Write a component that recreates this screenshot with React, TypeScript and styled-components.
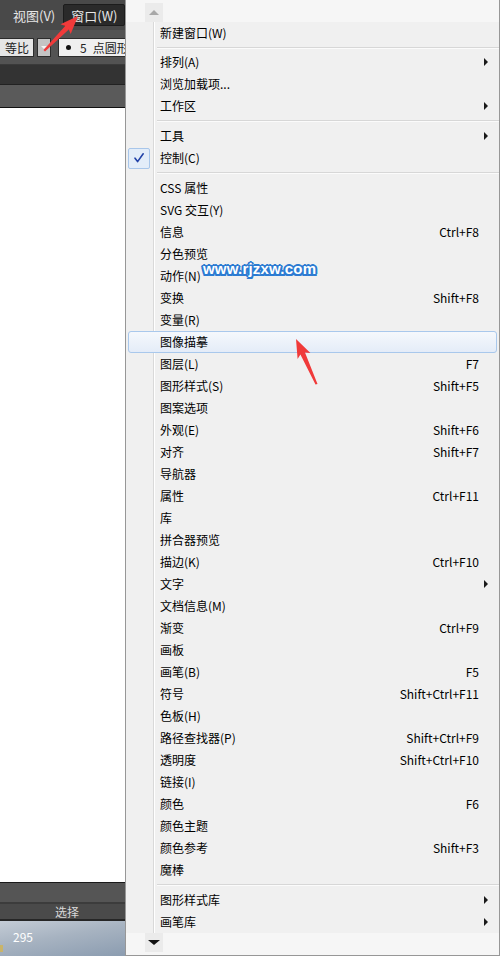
import React from "react";
import styled, { createGlobalStyle } from "styled-components";

const Global = createGlobalStyle`
  html, body { margin: 0; padding: 0; background: #fff; }
  body {
    width: 500px; height: 956px; overflow: hidden;
    font-family: "Noto Sans CJK SC", "Noto Sans", sans-serif;
    font-size: 12px;
  }
`;

const Page = styled.div`
  position: relative;
  width: 500px;
  height: 956px;
  display: flex;
  overflow: hidden;
`;

const LeftPane = styled.div`
  width: 125px;
  flex: none;
  display: flex;
  flex-direction: column;
  overflow: hidden;
  background: #fff;
`;

const MenuBar = styled.div`
  height: 30px;
  flex: none;
  background: #494949;
  display: flex;
  align-items: center;
  gap: 8px;
  padding-left: 13px;
  color: #e6e6e6;
  white-space: nowrap;
  font-size: 13px;
`;

const MenuBarItem = styled.div<{ $active?: boolean }>`
  height: ${(p) => (p.$active ? "20px" : "auto")};
  display: flex;
  align-items: center;
  padding: ${(p) => (p.$active ? "0 7px" : "0")};
  background: ${(p) => (p.$active ? "#2a2a2a" : "transparent")};
  border: ${(p) => (p.$active ? "1px solid #1c1c1c" : "none")};
  border-radius: 2px;
`;

const ToolBar = styled.div`
  height: 34px;
  flex: none;
  background: #535353;
  border-bottom: 1px solid #3a3a3a;
  display: flex;
  align-items: center;
  white-space: nowrap;
`;

const Field = styled.div`
  height: 17px;
  flex: none;
  background: #e6e6e6;
  border: 1px solid #2c2c2c;
  display: flex;
  align-items: center;
  color: #222;
  box-sizing: content-box;
`;

const FirstField = styled(Field)`
  border-left: none;
  padding-left: 5px;
  width: 28px;
`;

const WideField = styled(Field)`
  margin-left: 7px;
  padding-left: 7px;
  background: #efefef;
`;

const Dot = styled.span`
  width: 5px;
  height: 5px;
  flex: none;
  border-radius: 50%;
  background: #111;
  margin-right: 9px;
`;

const Spaced = styled.span`
  margin-right: 6px;
`;

const DropBtn = styled.div`
  width: 12px;
  height: 17px;
  flex: none;
  margin-left: 3px;
  background: #c4c4c4;
  border: 1px solid #2c2c2c;
  display: flex;
  align-items: center;
  justify-content: center;
  &::after {
    content: "";
    border-left: 3px solid transparent;
    border-right: 3px solid transparent;
    border-top: 3px solid #f4f4f4;
  }
`;

const DarkRow = styled.div`
  height: 19px;
  flex: none;
  background: #333333;
  border-bottom: 1px solid #222;
`;

const GrayRow = styled.div`
  height: 22px;
  flex: none;
  background: #5a5a5a;
  border-bottom: 1px solid #111;
`;

const Canvas = styled.div`
  flex: 1;
  background: #fff;
`;

const PanelTop = styled.div`
  height: 19px;
  flex: none;
  background: #555555;
  border-top: 1px solid #1a1a1a;
  border-bottom: 2px solid #3c3c3c;
`;

const PanelTab = styled.div`
  height: 15px;
  flex: none;
  background: #4a4a4a;
  border-bottom: 2px solid #262626;
  color: #d8d8d8;
  padding-left: 55px;
  display: flex;
  align-items: center;
  font-size: 12px;
  line-height: 1;
`;

const StatusBar = styled.div`
  position: relative;
  height: 35px;
  flex: none;
  background: linear-gradient(170deg, #c4ccd6 0%, #a7b3c1 45%, #8b9cb0 100%);
  color: #fff;
  display: flex;
  align-items: center;
  padding-left: 13px;
  padding-bottom: 4px;
  box-sizing: border-box;
`;

const YellowTab = styled.span`
  position: absolute;
  left: 0;
  top: 24px;
  width: 3px;
  height: 7px;
  background: #c9b46a;
`;

const Menu = styled.div`
  flex: 1;
  display: flex;
  flex-direction: column;
  background: #f0f0f0;
  border-left: 1px solid #979797;
  border-right: 1px solid #979797;
  border-bottom: 1px solid #979797;
  color: #000;
`;

const ScrollArea = styled.div`
  height: 22px;
  flex: none;
  background: #f6f6f6;
  padding-left: 19px;
  display: flex;
  align-items: flex-end;
`;

const ScrollAreaBottom = styled(ScrollArea)`
  align-items: flex-start;
`;

const ScrollBtn = styled.div<{ $down?: boolean }>`
  width: 18px;
  height: 19px;
  background: #ebebeb;
  display: flex;
  align-items: center;
  justify-content: center;
  &::after {
    content: "";
    border-left: ${(p) => (p.$down ? "6px" : "5px")} solid transparent;
    border-right: ${(p) => (p.$down ? "6px" : "5px")} solid transparent;
    ${(p) =>
      p.$down
        ? "border-top: 5px solid #111;"
        : "border-bottom: 5px solid #a8a8a8;"}
  }
`;

const ItemList = styled.div`
  flex: 1;
  display: flex;
  flex-direction: column;
  background: linear-gradient(
    to right,
    transparent 27px,
    #d9d9d9 27px,
    #d9d9d9 28px,
    #ffffff 28px,
    #ffffff 29px,
    transparent 29px
  );
`;

const Item = styled.div<{ $hover?: boolean }>`
  height: 22px;
  box-sizing: border-box;
  margin: 0 2px;
  display: flex;
  align-items: center;
  border: 1px solid ${(p) => (p.$hover ? "#a9c8ec" : "transparent")};
  border-radius: 3px;
  background: ${(p) =>
    p.$hover ? "linear-gradient(#f5f8fc, #e4ecf8)" : "transparent"};
  white-space: nowrap;
  line-height: 1;
`;

const Gutter = styled.div`
  width: 31px;
  height: 100%;
  flex: none;
  display: flex;
  align-items: center;
`;

const CheckBox = styled.div`
  width: 20px;
  height: 19px;
  margin-left: -1px;
  border: 1px solid #a8c6ea;
  border-radius: 2px;
  background: #e3edf9;
  display: flex;
  align-items: center;
  justify-content: center;
`;

const Label = styled.span`
  flex: 1;
`;

const Shortcut = styled.span`
  flex: none;
`;

const ArrowCell = styled.span`
  width: 17px;
  flex: none;
  padding-left: 5px;
  box-sizing: border-box;
  display: flex;
  align-items: center;
`;

const SubArrow = styled.span`
  border-left: 4px solid #1a1a1a;
  border-top: 4px solid transparent;
  border-bottom: 4px solid transparent;
`;

const Separator = styled.div<{ $h: number }>`
  height: ${(p) => p.$h}px;
  flex: none;
  padding-left: 31px;
  display: flex;
  align-items: center;
  box-sizing: border-box;
  &::after {
    content: "";
    flex: 1;
    border-top: 1px solid #d7d7d7;
    border-bottom: 1px solid #fbfbfb;
    box-sizing: border-box;
    height: 2px;
  }
`;

const Watermark = styled.div`
  position: absolute;
  left: 203px;
  top: 260px;
  font-family: "Liberation Sans", Arial, sans-serif;
  font-weight: 700;
  font-size: 15px;
  letter-spacing: 0.2px;
  color: #fff;
  text-shadow: -2px 0 #2c7bd2, 2px 0 #2c7bd2, 0 -2px #2c7bd2, 0 2px #2c7bd2,
    -1.5px -1.5px #2c7bd2, 1.5px 1.5px #2c7bd2, -1.5px 1.5px #2c7bd2,
    1.5px -1.5px #2c7bd2, -1px 0 #2c7bd2, 1px 0 #2c7bd2;
  pointer-events: none;
`;

const Overlay = styled.svg`
  position: absolute;
  left: 0;
  top: 0;
  pointer-events: none;
`;

type Entry =
  | { sep: number }
  | { label: string; shortcut?: string; sub?: boolean; checked?: boolean; hover?: boolean };

const entries: Entry[] = [
  { label: "新建窗口(W)" },
  { sep: 7 },
  { label: "排列(A)", sub: true },
  { label: "浏览加载项..." },
  { label: "工作区", sub: true },
  { sep: 8 },
  { label: "工具", sub: true },
  { label: "控制(C)", checked: true },
  { sep: 8 },
  { label: "CSS 属性" },
  { label: "SVG 交互(Y)" },
  { label: "信息", shortcut: "Ctrl+F8" },
  { label: "分色预览" },
  { label: "动作(N)" },
  { label: "变换", shortcut: "Shift+F8" },
  { label: "变量(R)" },
  { label: "图像描摹", hover: true },
  { label: "图层(L)", shortcut: "F7" },
  { label: "图形样式(S)", shortcut: "Shift+F5" },
  { label: "图案选项" },
  { label: "外观(E)", shortcut: "Shift+F6" },
  { label: "对齐", shortcut: "Shift+F7" },
  { label: "导航器" },
  { label: "属性", shortcut: "Ctrl+F11" },
  { label: "库" },
  { label: "拼合器预览" },
  { label: "描边(K)", shortcut: "Ctrl+F10" },
  { label: "文字", sub: true },
  { label: "文档信息(M)" },
  { label: "渐变", shortcut: "Ctrl+F9" },
  { label: "画板" },
  { label: "画笔(B)", shortcut: "F5" },
  { label: "符号", shortcut: "Shift+Ctrl+F11" },
  { label: "色板(H)" },
  { label: "路径查找器(P)", shortcut: "Shift+Ctrl+F9" },
  { label: "透明度", shortcut: "Shift+Ctrl+F10" },
  { label: "链接(I)" },
  { label: "颜色", shortcut: "F6" },
  { label: "颜色主题" },
  { label: "颜色参考", shortcut: "Shift+F3" },
  { label: "魔棒" },
  { sep: 8 },
  { label: "图形样式库", sub: true },
  { label: "画笔库", sub: true },
];

const CheckIcon = () => (
  <svg width="12" height="12" viewBox="0 0 12 12">
    <path
      d="M2 6.2 L4.6 9.6 L10.2 1.8"
      fill="none"
      stroke="#2242a8"
      strokeWidth="1.6"
      strokeLinecap="round"
      strokeLinejoin="round"
    />
  </svg>
);

export default function App() {
  return (
    <>
      <Global />
      <Page>
        <LeftPane>
          <MenuBar>
            <MenuBarItem>视图(V)</MenuBarItem>
            <MenuBarItem $active>窗口(W)</MenuBarItem>
          </MenuBar>
          <ToolBar>
            <FirstField>等比</FirstField>
            <DropBtn />
            <WideField>
              <Dot />
              <Spaced>5</Spaced>
              点圆形
            </WideField>
          </ToolBar>
          <DarkRow />
          <GrayRow />
          <Canvas />
          <PanelTop />
          <PanelTab>选择</PanelTab>
          <StatusBar>
            <YellowTab />
            295
          </StatusBar>
        </LeftPane>
        <Menu>
          <ScrollArea>
            <ScrollBtn />
          </ScrollArea>
          <ItemList>
            {entries.map((e, i) =>
              "sep" in e ? (
                <Separator key={i} $h={e.sep} />
              ) : (
                <Item key={i} $hover={e.hover}>
                  <Gutter>
                    {e.checked && (
                      <CheckBox>
                        <CheckIcon />
                      </CheckBox>
                    )}
                  </Gutter>
                  <Label>{e.label}</Label>
                  {e.shortcut && <Shortcut>{e.shortcut}</Shortcut>}
                  <ArrowCell>{e.sub && <SubArrow />}</ArrowCell>
                </Item>
              )
            )}
          </ItemList>
          <ScrollAreaBottom>
            <ScrollBtn $down />
          </ScrollAreaBottom>
        </Menu>
        <Watermark>www.rjzxw.com</Watermark>
        <Overlay width="500" height="956" viewBox="0 0 500 956">
          <polygon
            points="78,16 70.7,33.9 68.8,29.4 45,51.5 43.5,50 65.2,26 60.5,24.3"
            fill="#f03a3a"
          />
          <polygon
            points="296,339 310.4,353 305,352.5 317.5,384 315.5,384.5 300.4,354.6 297.6,359"
            fill="#f03a3a"
          />
        </Overlay>
      </Page>
    </>
  );
}
